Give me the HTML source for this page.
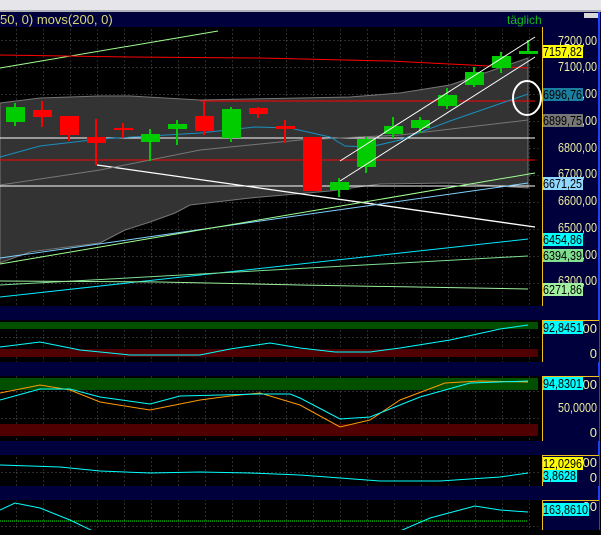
<!DOCTYPE html><html><head><style>
body{margin:0;background:#000;width:601px;height:530px;overflow:hidden;font-family:"Liberation Sans",sans-serif}
</style></head><body>
<svg width="601" height="530" viewBox="0 0 601 530" xmlns="http://www.w3.org/2000/svg" font-family="Liberation Sans, sans-serif">
<defs>
<pattern id="g" width="27" height="27" patternUnits="userSpaceOnUse" x="16" y="13">
<path d="M0 0V27M0 0H27" stroke="#555" stroke-width="1" stroke-dasharray="2,2" fill="none"/>
</pattern>
</defs>
<rect width="601" height="530" fill="#000"/>
<rect width="601" height="11" fill="#e6e6ea"/>
<rect y="10" width="601" height="2" fill="#b0b0b8"/>
<rect y="12" width="601" height="15" fill="#00003c"/>
<text x="0" y="24" font-size="13" fill="#d8d870">50, 0) movs(200, 0)</text>
<text x="507" y="24" font-size="12" fill="#10c010">täglich</text>
<rect x="584" y="13" width="14" height="5" fill="#d8d8d8"/>
<rect x="0" y="27" width="541" height="279" fill="url(#g)"/>
<polygon points="0,103 40,98 100,96 130,96 200,100 300,98 350,97 400,93 450,85 528,58 528,188 450,183 380,184 330,191 250,198 190,205 175,213 150,222 125,230 100,243 60,248 30,252 0,263" fill="#333" stroke="#777" stroke-width="1"/>
<polyline points="0,68 218,31" stroke="#a0ff90" fill="none"/>
<polyline points="0,55 130,57 260,58 390,61 528,68" stroke="#f00" fill="none"/>
<line x1="200" y1="101" x2="535" y2="101" stroke="#f00"/>
<line x1="0" y1="160" x2="535" y2="160" stroke="#f00"/>
<line x1="0" y1="138" x2="535" y2="138" stroke="#fff"/>
<line x1="0" y1="186" x2="535" y2="186" stroke="#fff"/>
<line x1="97" y1="165" x2="535" y2="227" stroke="#fff" stroke-width="1.3"/>
<polyline points="0,185 100,170 200,150 300,140 400,135 528,120" stroke="#777" fill="none"/>
<polyline points="0,157 40,146 100,139 200,133 255,127 290,128 330,137 345,146 370,147 400,140 450,121 528,94" stroke="#1a8fbf" fill="none"/>
<polyline points="0,258 528,183" stroke="#80d0ff" fill="none"/>
<polyline points="0,264 535,173" stroke="#a0ff90" fill="none"/>
<polyline points="0,297 528,239" stroke="#00e8ff" fill="none"/>
<polyline points="0,285 528,256" stroke="#80e090" fill="none"/>
<polyline points="0,281 160,282 300,285 528,289" stroke="#a0f0a0" fill="none"/>
<g stroke-width="2">
<line x1="15" y1="103" x2="15" y2="126" stroke="#0c0"/><rect x="6" y="107" width="19" height="15" fill="#0c0"/>
<line x1="42" y1="101" x2="42" y2="127" stroke="#f00"/><rect x="33" y="110" width="19" height="7" fill="#f00"/>
<line x1="69" y1="116" x2="69" y2="141" stroke="#f00"/><rect x="60" y="116" width="19" height="19" fill="#f00"/>
<line x1="96" y1="119" x2="96" y2="165" stroke="#f00"/><rect x="87" y="137" width="19" height="6" fill="#f00"/>
<line x1="123" y1="123" x2="123" y2="138" stroke="#f00"/><rect x="114" y="128" width="19" height="2" fill="#f00"/>
<line x1="150" y1="129" x2="150" y2="161" stroke="#0c0"/><rect x="141" y="134" width="19" height="8" fill="#0c0"/>
<line x1="177" y1="120" x2="177" y2="145" stroke="#0c0"/><rect x="168" y="124" width="19" height="5" fill="#0c0"/>
<line x1="204" y1="101" x2="204" y2="135" stroke="#f00"/><rect x="195" y="116" width="19" height="15" fill="#f00"/>
<line x1="231" y1="107" x2="231" y2="142" stroke="#0c0"/><rect x="222" y="109" width="19" height="29" fill="#0c0"/>
<line x1="258" y1="107" x2="258" y2="118" stroke="#f00"/><rect x="249" y="108" width="19" height="6" fill="#f00"/>
<line x1="285" y1="120" x2="285" y2="143" stroke="#f00"/><rect x="276" y="126" width="19" height="3" fill="#f00"/>
<rect x="303" y="137" width="19" height="54" fill="#f00"/>
<line x1="339" y1="178" x2="339" y2="197" stroke="#0c0"/><rect x="330" y="182" width="19" height="8" fill="#0c0"/>
<line x1="366" y1="137" x2="366" y2="173" stroke="#0c0"/><rect x="357" y="139" width="19" height="28" fill="#0c0"/>
<line x1="393" y1="117" x2="393" y2="138" stroke="#0c0"/><rect x="384" y="126" width="19" height="8" fill="#0c0"/>
<line x1="420" y1="117" x2="420" y2="133" stroke="#0c0"/><rect x="411" y="120" width="19" height="8" fill="#0c0"/>
<line x1="447" y1="88" x2="447" y2="109" stroke="#0c0"/><rect x="438" y="95" width="19" height="11" fill="#0c0"/>
<line x1="474" y1="67" x2="474" y2="87" stroke="#0c0"/><rect x="465" y="72" width="19" height="13" fill="#0c0"/>
<line x1="501" y1="52" x2="501" y2="73" stroke="#0c0"/><rect x="492" y="56" width="19" height="12" fill="#0c0"/>
<line x1="528" y1="40" x2="528" y2="54" stroke="#0c0"/><rect x="519" y="51" width="19" height="3" fill="#0c0"/>
</g>
<line x1="340" y1="161" x2="535" y2="37" stroke="#fff"/>
<line x1="340" y1="181" x2="535" y2="57" stroke="#fff"/>
<ellipse cx="527" cy="98" rx="14" ry="17" stroke="#fff" stroke-width="2" fill="none"/>
<rect x="542" y="27" width="57" height="279" fill="#00003c"/>
<line x1="542.5" y1="27" x2="542.5" y2="306" stroke="#f0c020"/>
<line x1="599" y1="12" x2="599" y2="530" stroke="#2040ff" stroke-width="2"/>
<g font-size="13" fill="#f0f0a0" text-anchor="end" lengthAdjust="spacingAndGlyphs">
<text x="597" y="45" textLength="39" lengthAdjust="spacingAndGlyphs">7200,00</text><text x="597" y="71" textLength="39" lengthAdjust="spacingAndGlyphs">7100,00</text><text x="597" y="98" textLength="39" lengthAdjust="spacingAndGlyphs">7000,00</text><text x="597" y="125" textLength="39" lengthAdjust="spacingAndGlyphs">6900,00</text>
<text x="597" y="152" textLength="39" lengthAdjust="spacingAndGlyphs">6800,00</text><text x="597" y="178" textLength="39" lengthAdjust="spacingAndGlyphs">6700,00</text><text x="597" y="205" textLength="39" lengthAdjust="spacingAndGlyphs">6600,00</text><text x="597" y="232" textLength="39" lengthAdjust="spacingAndGlyphs">6500,00</text>
<text x="597" y="259" textLength="39" lengthAdjust="spacingAndGlyphs">6400,00</text><text x="597" y="285" textLength="39" lengthAdjust="spacingAndGlyphs">6300,00</text>
</g>
<g font-size="13" fill="#000">
<rect x="543" y="45" width="40" height="13" fill="#ff0"/><text x="543" y="56" textLength="39" lengthAdjust="spacingAndGlyphs">7157,82</text>
<rect x="543" y="88" width="40" height="13" fill="#1a7fa0"/><text x="543" y="99" textLength="39" lengthAdjust="spacingAndGlyphs">6996,76</text>
<rect x="543" y="114" width="40" height="13" fill="#777"/><text x="543" y="125" textLength="39" lengthAdjust="spacingAndGlyphs">6899,75</text>
<rect x="543" y="177" width="40" height="13" fill="#90d8ff"/><text x="543" y="188" textLength="39" lengthAdjust="spacingAndGlyphs">6671,25</text>
<rect x="543" y="233" width="40" height="13" fill="#00ffff"/><text x="543" y="244" textLength="39" lengthAdjust="spacingAndGlyphs">6454,86</text>
<rect x="543" y="249" width="40" height="13" fill="#80e090"/><text x="543" y="260" textLength="39" lengthAdjust="spacingAndGlyphs">6394,39</text>
<rect x="543" y="283" width="40" height="13" fill="#a0f0a0"/><text x="543" y="294" textLength="39" lengthAdjust="spacingAndGlyphs">6271,86</text>
</g>
<rect x="0" y="306" width="598" height="14" fill="#00003c"/>
<rect x="0" y="362" width="598" height="14" fill="#00003c"/>
<rect x="0" y="441" width="598" height="14" fill="#00003c"/>
<rect x="0" y="486" width="598" height="14" fill="#00003c"/>
<rect x="0" y="320" width="541" height="42" fill="url(#g)"/>
<rect x="0" y="322" width="538" height="7" fill="#005000"/>
<rect x="0" y="349" width="538" height="8" fill="#500000"/>
<polyline points="0,347 40,342 80,350 130,355 200,355 230,349 270,343 300,348 335,352 370,352 400,348 450,340 500,329 528,325" stroke="#00ffff" fill="none"/>
<rect x="0" y="376" width="541" height="65" fill="url(#g)"/>
<rect x="0" y="378" width="538" height="12" fill="#005000"/>
<rect x="0" y="424" width="538" height="12" fill="#500000"/>
<polyline points="0,393 40,385 70,390 100,402 150,410 200,400 230,396 260,393 300,405 340,427 370,420 400,400 445,383 480,381 528,382" stroke="#ff9900" fill="none"/>
<polyline points="0,400 40,389 70,389 100,397 150,404 180,396 260,394 290,394 300,398 340,419 370,417 420,397 470,383 528,381" stroke="#00ffff" fill="none"/>
<rect x="0" y="455" width="541" height="31" fill="url(#g)"/>
<polyline points="0,465 60,467 100,471 150,473 200,472 250,473 300,475 380,481 440,481 500,477 528,473" stroke="#00ffff" fill="none"/>
<rect x="0" y="500" width="541" height="30" fill="url(#g)"/>
<line x1="0" y1="521" x2="528" y2="521" stroke="#00ff00" stroke-dasharray="1,1"/>
<polyline points="0,510 15,503 40,508 70,520 95,532 400,531 430,518 460,510 475,506 500,510 528,512" stroke="#00ffff" fill="none"/>
<g>
<rect x="542" y="320" width="57" height="42" fill="#00003c"/>
<rect x="542" y="376" width="57" height="65" fill="#00003c"/>
<rect x="542" y="455" width="57" height="31" fill="#00003c"/>
<rect x="542" y="500" width="57" height="30" fill="#00003c"/>
<path d="M542.5 320V362M542.5 376V441M542.5 455V486M542.5 500V530M542 320.5H599M542 376.5H599M542 455.5H599M542 500.5H599" stroke="#f0c020"/>
</g>
<g font-size="13" fill="#f0f0a0" text-anchor="end">
<text x="597" y="333">00</text><text x="597" y="358">0</text>
<text x="597" y="389">00</text><text x="597" y="412" textLength="39" lengthAdjust="spacingAndGlyphs">50,0000</text><text x="597" y="437">0</text>
<text x="597" y="467">00</text><text x="597" y="482">0</text>
<text x="597" y="511">00</text>
</g>
<g font-size="13" fill="#000">
<rect x="543" y="321" width="40" height="13" fill="#00ffff"/><text x="543" y="332" textLength="39" lengthAdjust="spacingAndGlyphs">92,8451</text>
<rect x="543" y="377" width="40" height="13" fill="#00ffff"/><text x="543" y="388" textLength="39" lengthAdjust="spacingAndGlyphs">94,8301</text>
<rect x="543" y="457" width="40" height="13" fill="#ff0"/><text x="543" y="468" textLength="39" lengthAdjust="spacingAndGlyphs">12,0296</text>
<rect x="543" y="470" width="34" height="12" fill="#00ffff"/><text x="543" y="480" textLength="33" lengthAdjust="spacingAndGlyphs">3,8628</text>
<rect x="543" y="503" width="46" height="13" fill="#00ffff"/><text x="543" y="514" textLength="45" lengthAdjust="spacingAndGlyphs">163,8610</text>
</g>
</svg>
</body></html>
